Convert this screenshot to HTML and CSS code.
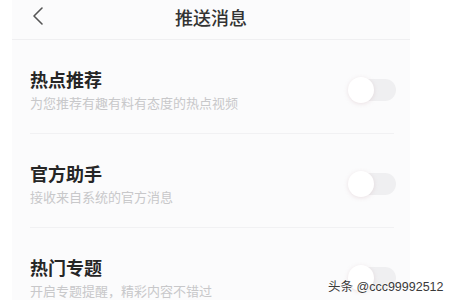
FILE: index.html
```html
<!DOCTYPE html>
<html lang="zh-CN">
<head>
    <meta charset="UTF-8">
    <meta name="viewport" content="width=device-width, initial-scale=1.0">
    <title>推送消息</title>
    <link rel="stylesheet" href="styles.css">
</head>
<body>
    <div class="screen">
        <div class="header">
            <svg class="back" width="14" height="20" viewBox="0 0 14 20">
                <polyline points="11,2 3,10 11,18" fill="none" stroke="#555" stroke-width="1.6" stroke-linecap="round" stroke-linejoin="round"/>
            </svg>
            <div class="title">推送消息</div>
        </div>

        <div class="list">
            <div class="row">
                <div class="text">
                    <div class="name">热点推荐</div>
                    <div class="desc">为您推荐有趣有料有态度的热点视频</div>
                </div>
                <div class="switch"><span class="knob"></span></div>
            </div>
            <div class="row">
                <div class="text">
                    <div class="name">官方助手</div>
                    <div class="desc">接收来自系统的官方消息</div>
                </div>
                <div class="switch"><span class="knob"></span></div>
            </div>
            <div class="row">
                <div class="text">
                    <div class="name">热门专题</div>
                    <div class="desc">开启专题提醒，精彩内容不错过</div>
                </div>
                <div class="switch"><span class="knob"></span></div>
            </div>
        </div>
    </div>

    <div class="watermark">头条 @ccc99992512</div>
</body>
</html>
```

FILE: styles.css
```css
body {
    margin: 0;
    height: 300px;
    background-color: #ffffff;
    font-family: "Noto Sans CJK SC", "Noto Sans", sans-serif;
    overflow: hidden;
}
.screen {
    width: 398px;
    height: 300px;
    margin-left: 12px;
    background-color: #fbfbfc;
    overflow: hidden;
}
.header {
    position: relative;
    height: 35px;
    padding-bottom: 4px;
    border-bottom: 1px solid #efeff1;
    display: flex;
    align-items: center;
    justify-content: center;
}
.back {
    position: absolute;
    left: 19px;
    top: 6px;
}
.title {
    font-size: 18px;
    line-height: 35px;
    color: #333;
    font-weight: 500;
}
.list {
    padding: 0 16px 0 18px;
}
.row {
    display: flex;
    align-items: center;
    justify-content: space-between;
    padding: 27px 0 21px;
    border-bottom: 1px solid #f1f1f3;
}
.name {
    font-size: 18px;
    line-height: 24px;
    font-weight: 700;
    color: #262626;
}
.desc {
    margin-top: 3px;
    font-size: 13px;
    line-height: 18px;
    color: #c8c8ca;
}
.switch {
    position: relative;
    width: 40px;
    height: 22px;
    margin-right: -2px;
    border-radius: 11px;
    background-color: #efeff1;
}
.knob {
    position: absolute;
    left: -8px;
    top: -2px;
    width: 26px;
    height: 26px;
    border-radius: 50%;
    background-color: #ffffff;
    box-shadow: 0 1px 4px rgba(190, 150, 160, 0.25);
}
.watermark {
    position: absolute;
    left: 328px;
    top: 276px;
    font-family: "Liberation Sans", "Noto Sans CJK SC", sans-serif;
    font-size: 12.5px;
    color: #3a3a3a;
    text-shadow: 0 0 2px #fff, 0 0 2px #fff;
}
```
